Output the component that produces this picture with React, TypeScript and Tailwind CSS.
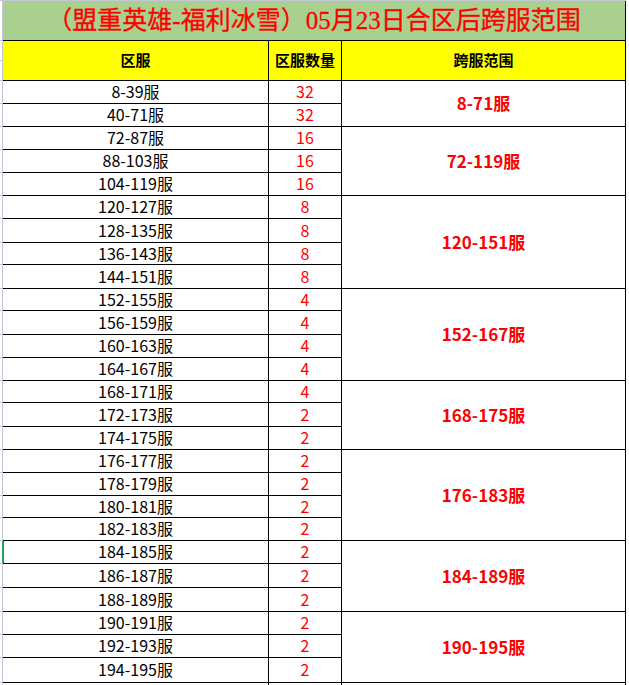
import React from "react";

const rows: [string, number, number][] = [
  ["8-39服", 32, 23],
  ["40-71服", 32, 23],
  ["72-87服", 16, 23],
  ["88-103服", 16, 23],
  ["104-119服", 16, 23],
  ["120-127服", 8, 23],
  ["128-135服", 8, 24],
  ["136-143服", 8, 22],
  ["144-151服", 8, 24],
  ["152-155服", 4, 22],
  ["156-159服", 4, 24],
  ["160-163服", 4, 23],
  ["164-167服", 4, 23],
  ["168-171服", 4, 22],
  ["172-173服", 2, 24],
  ["174-175服", 2, 23],
  ["176-177服", 2, 23],
  ["178-179服", 2, 23],
  ["180-181服", 2, 22],
  ["182-183服", 2, 23],
  ["184-185服", 2, 23],
  ["186-187服", 2, 24],
  ["188-189服", 2, 24],
  ["190-191服", 2, 23],
  ["192-193服", 2, 23],
  ["194-195服", 2, 25],
];

const groups: [string, number][] = [
  ["8-71服", 2],
  ["72-119服", 3],
  ["120-151服", 4],
  ["152-167服", 4],
  ["168-175服", 3],
  ["176-183服", 4],
  ["184-189服", 3],
  ["190-195服", 3],
];

const H: Record<number, string> = {
  22: "h-[22px]",
  23: "h-[23px]",
  24: "h-[24px]",
  25: "h-[25px]",
};

const font = "font-['Noto_Sans_CJK_SC',sans-serif]";

function Strip({ selected }: { selected?: boolean }) {
  return (
    <div className="relative w-[3px] shrink-0 self-stretch border-r border-b border-[#c3c7d4] bg-white">
      {selected && <div className="absolute left-[2px] top-0 bottom-0 w-[2px] bg-[#21a366]" />}
    </div>
  );
}

export default function App() {
  let idx = 0;
  return (
    <div className={`w-[629px] h-[685px] overflow-hidden bg-white ${font}`}>
      <div className="h-px w-[626px] bg-[#c3c7d4]" />
      {/* Title row */}
      <div className="flex h-[40px]">
        <Strip />
        <div className="flex w-[623px] items-center justify-center border-r border-b border-black bg-[#a9d08e]">
          <span className="font-['Liberation_Serif','Noto_Sans_CJK_SC',serif] text-[25px] leading-none text-[#ff0000] [-webkit-text-stroke:0.3px_#ff0000]">
            （盟重英雄-福利冰雪）05月23日合区后跨服范围
          </span>
        </div>
      </div>
      {/* Header row */}
      <div className="flex h-[40px]">
        <div className="flex w-[3px] shrink-0 flex-col">
          <div className="h-[20px] border-r border-b border-[#c3c7d4]" />
          <div className="h-[20px] border-r border-b border-[#c3c7d4]" />
        </div>
        <div className="flex w-[266px] items-center justify-center border-r border-b border-black bg-[#ffff00] text-[15px] font-bold text-black">
          区服
        </div>
        <div className="flex w-[73px] items-center justify-center border-r border-b border-black bg-[#ffff00] text-[15px] font-bold text-black">
          区服数量
        </div>
        <div className="flex w-[284px] items-center justify-center border-r border-b border-black bg-[#ffff00] text-[15px] font-bold text-black">
          跨服范围
        </div>
      </div>
      {/* Groups */}
      {groups.map(([label, n]) => {
        const slice = rows.slice(idx, idx + n);
        const start = idx;
        idx += n;
        return (
          <div key={label} className="flex">
            <div className="flex w-[342px] flex-col">
              {slice.map(([name, count, h], i) => (
                <div key={name} className={`flex ${H[h]}`}>
                  <Strip selected={start + i === 20} />
                  <div className="flex w-[266px] items-center justify-center border-r border-b border-black pb-[2px] text-[16px] leading-none text-black">
                    {name}
                  </div>
                  <div className="flex w-[73px] items-center justify-center border-r border-b border-black pb-[2px] text-[16px] leading-none text-[#ff0000]">
                    {count}
                  </div>
                </div>
              ))}
            </div>
            <div className="flex w-[284px] items-center justify-center border-r border-b border-black pb-[2px] text-[17px] font-bold leading-none text-[#ff0000]">
              {label}
            </div>
          </div>
        );
      })}
      <div className="flex h-[23px]">
        <Strip />
        <div className="w-[266px] border-r border-b border-black" />
        <div className="w-[73px] border-r border-b border-black" />
        <div className="w-[284px] border-r border-b border-black" />
      </div>
    </div>
  );
}
